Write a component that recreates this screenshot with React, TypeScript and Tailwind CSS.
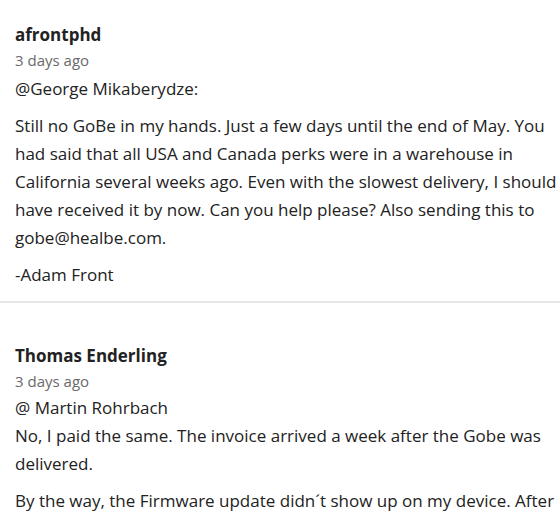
import React from 'react'

interface Comment {
  author: string
  time: string
  // each paragraph is a list of lines, as they wrap in the feed
  paragraphs: string[][]
}

const comments: Comment[] = [
  {
    author: 'afrontphd',
    time: '3 days ago',
    paragraphs: [
      ['@George Mikaberydze:'],
      [
        'Still no GoBe in my hands. Just a few days until the end of May. You',
        'had said that all USA and Canada perks were in a warehouse in',
        'California several weeks ago. Even with the slowest delivery, I should',
        'have received it by now. Can you help please? Also sending this to',
        'gobe@healbe.com.',
      ],
      ['-Adam Front'],
    ],
  },
  {
    author: 'Thomas Enderling',
    time: '3 days ago',
    paragraphs: [
      [
        '@ Martin Rohrbach',
        'No, I paid the same. The invoice arrived a week after the Gobe was',
        'delivered.',
      ],
      [
        'By the way, the Firmware update didn´t show up on my device. After',
        'installing the new app version, the band asked for the update.',
      ],
    ],
  },
]

function CommentItem({ comment, first }: { comment: Comment; first: boolean }) {
  return (
    <div className={first ? 'pl-[15px] pt-[22px] pb-[12px]' : 'border-t-2 border-[#e6e6e6] pl-[15px] pt-[40px] pb-[14px]'}>
      <div className="text-[17px] font-bold leading-[26px] text-[#222]">{comment.author}</div>
      <div className="text-[15px] leading-[24px] text-[#6a6a6a]">{comment.time}</div>
      <div className={first ? 'mt-[3px] space-y-[9px] text-[17px] leading-[28px] text-[#222]' : 'mt-[1px] space-y-[9px] text-[17px] leading-[28px] text-[#222]'}>
        {comment.paragraphs.map((lines, i) => (
          <p key={i} className="whitespace-nowrap">
            {lines.map((line, j) => (
              <React.Fragment key={j}>
                {j > 0 && <br />}
                {line}
              </React.Fragment>
            ))}
          </p>
        ))}
      </div>
    </div>
  )
}

export default function App() {
  return (
    <div className="h-[518px] w-[560px] overflow-hidden bg-white" style={{ fontFamily: '"Open Sans", "Liberation Sans", sans-serif' }}>
      {comments.map((c, i) => (
        <CommentItem key={i} comment={c} first={i === 0} />
      ))}
    </div>
  )
}
